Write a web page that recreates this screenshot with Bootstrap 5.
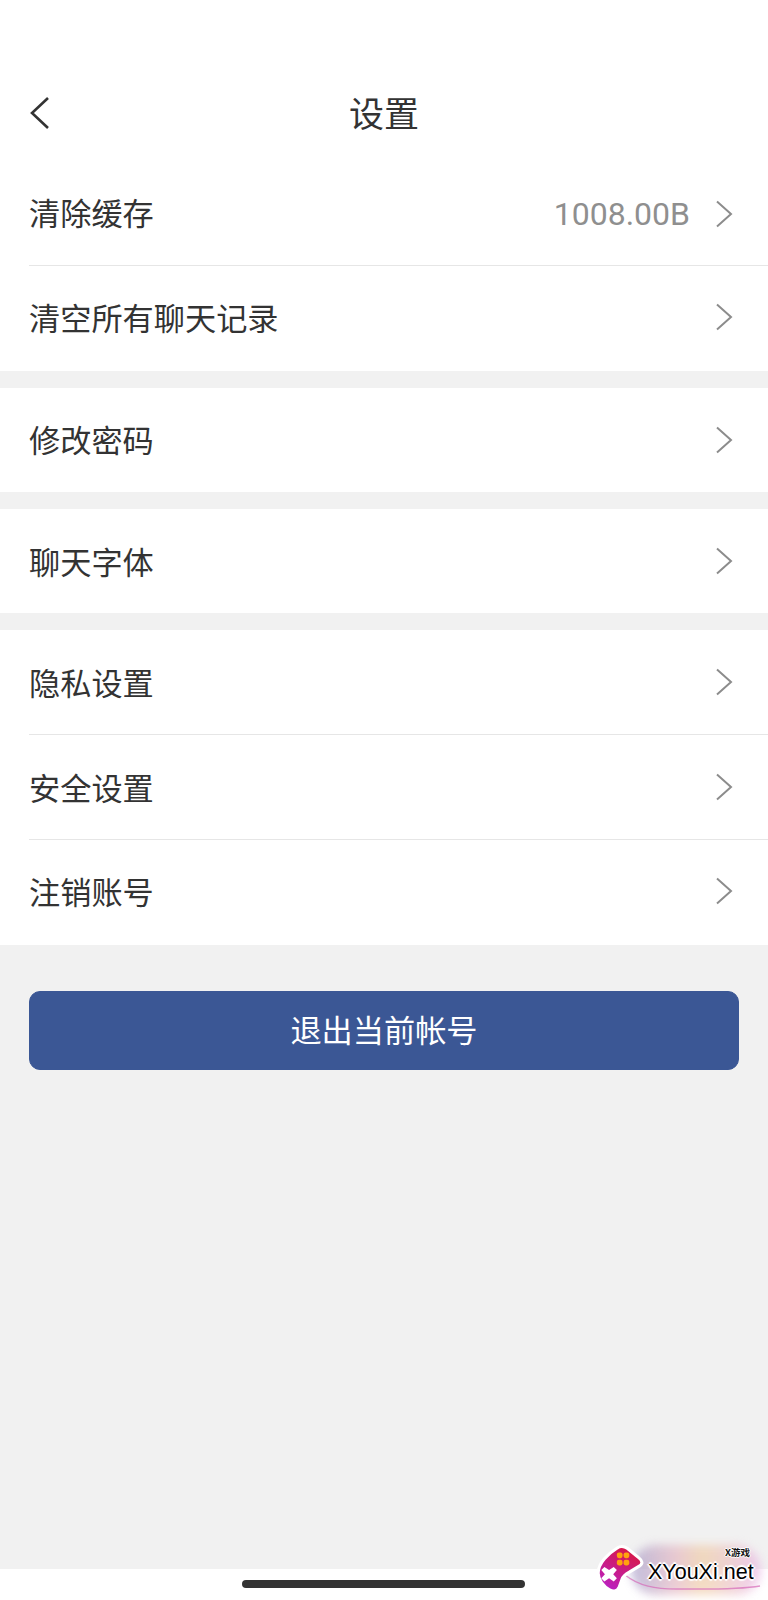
<!DOCTYPE html>
<html lang="zh-CN">
<head>
<meta charset="utf-8">
<title>设置</title>
<link href="https://cdn.jsdelivr.net/npm/bootstrap@5.3.0/dist/css/bootstrap.min.css" rel="stylesheet">
<style>
html,body{height:1600px;overflow:hidden}
body{background:#f1f1f1;color:#333;font-family:"Noto Sans CJK SC","Liberation Sans",sans-serif;font-weight:400;position:relative}
.shell{height:1600px}
.topbar{height:162px;background:#fff;padding:0 29px;position:relative}
.topbar-title{font-size:35px;line-height:48px;padding-top:88px;text-align:center;color:#333;font-weight:400}
.back-link{position:absolute;left:29px;top:96px;width:22px;height:34px;display:block}
.group-gap{margin-bottom:17px;border-radius:0;background:#fff}
.set-row{height:105px;padding:0 35px 0 0;margin-left:29px;border:0;border-bottom:1px solid #e6e6e6;background:#fff;color:#333;font-size:31.2px;line-height:44px}
.set-row:last-child{border-bottom:0}
.lift-two .row-label{position:relative;top:-2px}
.lift-one .row-label{position:relative;top:-1px}
.lift-chev .chev{position:relative;top:-2px}
.first-row{height:104px}
.val-text{font-family:"Roboto","Liberation Sans",sans-serif;font-size:32px;color:#8f8f8f;margin-right:25px;font-weight:400}
.chev{width:18px;height:28px;display:block;flex:none}
.logout{display:block;width:710px;height:79px;margin:46px 0 0 29px;background:#3b5795;border-color:#3b5795;border-radius:11px;color:#fff;font-size:31.2px;line-height:44px;font-weight:400;padding:0 0 4px}
.logout:hover{background:#3b5795;border-color:#3b5795;color:#fff}
.foot-strip{height:31px;background:#fff;position:relative}
.home-bar{width:283px;height:8px;margin-left:242px;position:absolute;top:11px;background:#333;border-radius:4px}
.mark-wrap{position:absolute;left:597px;top:1540px;width:171px;height:60px}
.mark-glow{position:absolute;left:34px;top:5px;width:130px;height:50px;border-radius:26px;background:linear-gradient(90deg,#a7a0cc,#e6b9c4 35%,#f0cfa8 55%,#e9b8e8);filter:blur(5px);opacity:.7}
.mark-swoosh{position:absolute;left:0;top:0;width:171px;height:60px}
.mark-icon{position:absolute;left:-1px;top:0;width:50px;height:56px}
.mark-site{position:absolute;left:51px;top:19px;font-family:"Liberation Sans",sans-serif;font-size:21.5px;line-height:26px;color:#000;font-weight:400;text-shadow:1px 0 0 #fff,-1px 0 0 #fff,0 1px 0 #fff,0 -1px 0 #fff,2px 0 1px #fff,-2px 0 1px #fff,0 2px 1px #fff,0 -2px 1px #fff}
.mark-cn{position:absolute;left:128px;top:5px;font-size:9.5px;line-height:14px;color:#111;font-weight:700;text-shadow:1px 0 0 #fff,-1px 0 0 #fff,0 1px 0 #fff,0 -1px 0 #fff}
</style>
</head>
<body>
<div class="shell d-flex flex-column">
  <header class="topbar">
    <a class="back-link" href="#" aria-label="返回">
      <svg width="22" height="34" viewBox="0 0 22 34" fill="none"><path d="M19 2 3 17l16 15" stroke="#333" stroke-width="2.6"/></svg>
    </a>
    <div class="topbar-title">设置</div>
  </header>

  <div class="list-group list-group-flush group-gap">
    <div class="list-group-item set-row first-row lift-two d-flex align-items-center">
      <span class="row-label flex-grow-1">清除缓存</span>
      <span class="val-text">1008.00B</span>
      <svg class="chev" viewBox="0 0 18 28" fill="none"><path d="M2 1.5 16 14 2 26.5" stroke="#8c8c8c" stroke-width="2"/></svg>
    </div>
    <div class="list-group-item set-row lift-two lift-chev d-flex align-items-center">
      <span class="row-label flex-grow-1">清空所有聊天记录</span>
      <svg class="chev" viewBox="0 0 18 28" fill="none"><path d="M2 1.5 16 14 2 26.5" stroke="#8c8c8c" stroke-width="2"/></svg>
    </div>
  </div>

  <div class="list-group list-group-flush group-gap">
    <div class="list-group-item set-row first-row lift-one d-flex align-items-center">
      <span class="row-label flex-grow-1">修改密码</span>
      <svg class="chev" viewBox="0 0 18 28" fill="none"><path d="M2 1.5 16 14 2 26.5" stroke="#8c8c8c" stroke-width="2"/></svg>
    </div>
  </div>

  <div class="list-group list-group-flush group-gap">
    <div class="list-group-item set-row first-row d-flex align-items-center">
      <span class="row-label flex-grow-1">聊天字体</span>
      <svg class="chev" viewBox="0 0 18 28" fill="none"><path d="M2 1.5 16 14 2 26.5" stroke="#8c8c8c" stroke-width="2"/></svg>
    </div>
  </div>

  <div class="list-group list-group-flush group-gap mb-0">
    <div class="list-group-item set-row d-flex align-items-center">
      <span class="row-label flex-grow-1">隐私设置</span>
      <svg class="chev" viewBox="0 0 18 28" fill="none"><path d="M2 1.5 16 14 2 26.5" stroke="#8c8c8c" stroke-width="2"/></svg>
    </div>
    <div class="list-group-item set-row d-flex align-items-center">
      <span class="row-label flex-grow-1">安全设置</span>
      <svg class="chev" viewBox="0 0 18 28" fill="none"><path d="M2 1.5 16 14 2 26.5" stroke="#8c8c8c" stroke-width="2"/></svg>
    </div>
    <div class="list-group-item set-row lift-two lift-chev d-flex align-items-center">
      <span class="row-label flex-grow-1">注销账号</span>
      <svg class="chev" viewBox="0 0 18 28" fill="none"><path d="M2 1.5 16 14 2 26.5" stroke="#8c8c8c" stroke-width="2"/></svg>
    </div>
  </div>

  <div><button class="btn logout" type="button">退出当前帐号</button></div>

  <div class="flex-grow-1"></div>
  <div class="foot-strip"><div class="home-bar"></div></div>
</div>

<div class="mark-wrap">
  <div class="mark-glow"></div>
  <svg class="mark-swoosh" viewBox="0 0 171 60" fill="none"><path d="M28 35C42 46 58 49 80 49S140 50 163 46" stroke="#d56ab8" stroke-width="1.500" opacity=".7"/></svg>
  <svg class="mark-icon" viewBox="0 0 48 54">
    <defs><linearGradient id="padg" x1="0.7" y1="0" x2="0.2" y2="1"><stop offset="0" stop-color="#d9173f"/><stop offset="1" stop-color="#b921c9"/></linearGradient></defs>
    <path d="M20 8C24 5 27 6 30 8L41 17C45 20 45 23 42 25L32 31C28 33 26 35 25 38L22 46C20 50 16 50 13 48 7 45 2 38 2 32 2 22 12 13 20 8Z" fill="url(#padg)" stroke="#fff" stroke-width="3" stroke-linejoin="round"/>
    <path d="m8 26 4.500 3 4.500-3 3 3-3.500 4 3.500 4-3 3-4.500-3-4.500 3-3-3 3.500-4-3.500-4Z" fill="#fff"/>
    <rect x="20" y="12" width="5.500" height="5.500" rx="2" fill="#ffa20e"/><rect x="26.500" y="12" width="5.500" height="5.500" rx="2" fill="#ffa20e"/>
    <rect x="20" y="19" width="5.500" height="5.500" rx="2" fill="#ffa20e"/><rect x="26.500" y="19" width="5.500" height="5.500" rx="2" fill="#ffa20e"/>
  </svg>
  <div class="mark-site">XYouXi.net</div>
  <div class="mark-cn">X游戏</div>
</div>
<script src="https://cdn.jsdelivr.net/npm/bootstrap@5.3.0/dist/js/bootstrap.bundle.min.js"></script>
</body>
</html>
